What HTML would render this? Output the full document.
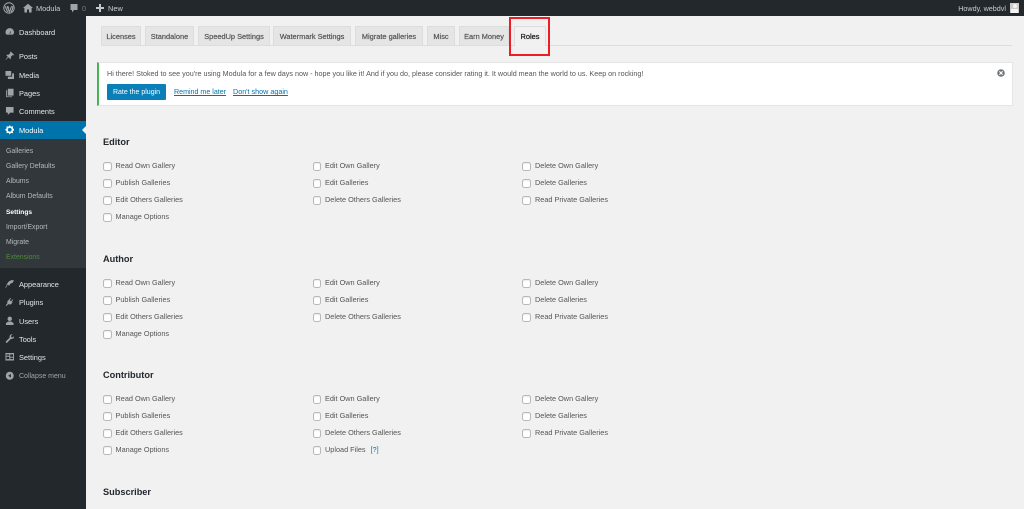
<!DOCTYPE html>
<html style="overflow:hidden;height:509px"><head><meta charset="utf-8"><style>
html,body{margin:0;padding:0}
body{width:1024px;height:509px;overflow:hidden;position:relative;background:#f1f1f1;font:7.4px/12px "Liberation Sans",sans-serif;color:#444}
#wrap{left:0;top:0;width:1024px;height:509px;overflow:hidden;background:#f1f1f1}
div,span,a,svg{position:absolute;white-space:nowrap}
#bar{left:0;top:0;width:1024px;height:16px;background:#23282d}
#bar span{color:#ccc;top:2.5px;font-size:7.4px}
#side{left:0;top:16px;width:85.5px;height:493px;background:#23282d}
#sub{left:0;top:139px;width:85.5px;height:129px;background:#32373c}
.m{left:19px;color:#e4e6e8;margin-top:-5.5px;font-size:7.4px}
.s{left:6px;color:#b4b9be;margin-top:-5.5px;font-size:6.9px}
.i{left:4.5px;width:9.5px;height:9.5px;margin-top:-5px;fill:#9ea3a8}
.tab{top:26px;height:18px;background:#e5e5e5;border:1px solid #ddd;border-bottom:0;text-align:center;line-height:20px;color:#555;font-size:7.4px;-webkit-text-stroke:.2px #555}
.sec{left:0;width:1024px;height:17px}
.sec b{left:103px;top:-7px;font-size:9.2px;line-height:14px;color:#23282d;position:absolute}
.c{width:8.5px;height:8.5px;box-sizing:border-box;background:#fff;border:1px solid #b4b9be;border-radius:2.5px;box-shadow:inset 0 1px 1px rgba(0,0,0,.08)}
.l{color:#555;font-size:7.3px}
.x1{left:103px}.x2{left:312.5px}.x3{left:522px}
.t1{left:115.5px}.t2{left:325px}.t3{left:535px}
.c.r1{top:20px}.c.r2{top:37px}.c.r3{top:54px}.c.r4{top:71px}
.l.r1{top:18px}.l.r2{top:35px}.l.r3{top:52px}.l.r4{top:69px}
</style></head><body><div id="wrap">
<div id="side"></div>
<div id="sub"></div>
<div id="bar">
<svg style="left:3px;top:2px" width="12" height="12" viewBox="0 0 12 12"><circle cx="6" cy="6" r="5.2" fill="none" stroke="#a0a5aa" stroke-width="1"/><path d="M2.2 4.4 4.6 10M4 4.2 6.4 10 8.6 4.2M6 6.6 4.6 4.2M9.6 4.2C10.2 6 9.4 7.8 8 10" fill="none" stroke="#a0a5aa" stroke-width="1.1"/></svg>
<svg style="left:23px;top:3px" width="10" height="10" viewBox="0 0 10 10"><path d="M5 .8 10 5H8.6V9.5H6V6.5H4V9.5H1.4V5H0Z" fill="#a0a5aa"/></svg>
<span style="left:36px">Modula</span>
<svg style="left:69px;top:3px" width="10" height="10" viewBox="0 0 10 10"><path d="M1.5 1H8.5V7H5L3 9.5V7H1.5Z" fill="#a0a5aa"/></svg>
<span style="left:82px;color:#777">0</span>
<svg style="left:96px;top:4px" width="8" height="8" viewBox="0 0 8 8"><path d="M3 0H5V3H8V5H5V8H3V5H0V3H3Z" fill="#c4c7ca"/></svg>
<span style="left:108px">New</span>
<span style="right:18px;font-size:7.2px">Howdy, webdvl</span>
<div style="left:1010px;top:3px;width:9px;height:10px;background:#ccc"></div>
<div style="left:1012.5px;top:4px;width:4px;height:4px;background:#f4f4f4;border-radius:2px"></div>
<div style="left:1011px;top:8.5px;width:7px;height:4px;background:#f4f4f4"></div>
</div>

<div style="left:0;top:121px;width:85.5px;height:18px;background:#0073aa"></div>
<div style="left:81.5px;top:126px;width:0;height:0;border:4px solid transparent;border-right-color:#f1f1f1;border-left:0"></div>

<svg class="i" style="top:32px" viewBox="0 0 10 10"><path d="M5 1.2A4.5 4.5 0 0 0 .6 6.5L1.5 8H8.5L9.4 6.5A4.5 4.5 0 0 0 5 1.2ZM4.5 7 6.5 3.5 5.6 7Z"/></svg><span class="m" style="top:32px">Dashboard</span>
<svg class="i" style="top:56px" viewBox="0 0 10 10"><path d="M6 .5 9.5 4 8.6 4.8 7.8 4.4 6 6.4 6.2 8 5.4 8.6 3.6 6.6 1 9.4.6 9 3 6 1.4 4.6 2 3.8 3.6 4 5.6 2.2 5.2 1.4Z"/></svg><span class="m" style="top:56px">Posts</span>
<svg class="i" style="top:75px" viewBox="0 0 10 10"><path d="M.5 1H6.5V6H.5ZM7.5 3.5H9.5V9.5H3V7H7.5Z"/></svg><span class="m" style="top:75px">Media</span>
<svg class="i" style="top:93px" viewBox="0 0 10 10"><path d="M3 .8H9V8H3ZM1.2 2.2H2.2V8.8H7.5V9.6H1.2Z"/></svg><span class="m" style="top:93px">Pages</span>
<svg class="i" style="top:111px" viewBox="0 0 10 10"><path d="M1 1H9V7H5.5L3 9.5V7H1Z"/></svg><span class="m" style="top:111px">Comments</span>
<svg class="i" style="top:130px;fill:#fff" viewBox="0 0 10 10"><path d="M5 0 6 1.6 8.5 1.5 8.2 3.4 10 5 8.2 6.6 8.5 8.5 6 8.4 5 10 4 8.4 1.5 8.5 1.8 6.6 0 5 1.8 3.4 1.5 1.5 4 1.6ZM5 3A2 2 0 1 0 5 7 2 2 0 1 0 5 3Z" fill-rule="evenodd"/></svg><span class="m" style="top:130px;color:#fff">Modula</span>

<span class="s" style="top:151px">Galleries</span>
<span class="s" style="top:166px">Gallery Defaults</span>
<span class="s" style="top:181px">Albums</span>
<span class="s" style="top:196px">Album Defaults</span>
<span class="s" style="top:212px;color:#fff;font-weight:bold;font-size:6.6px">Settings</span>
<span class="s" style="top:227px">Import/Export</span>
<span class="s" style="top:242px">Migrate</span>
<span class="s" style="top:257px;color:#4c8a3a">Extensions</span>

<svg class="i" style="top:284px" viewBox="0 0 10 10"><path d="M9.5 1.5 8 4 5.5 5 4.5 7 2.5 6 1 9.5.5 9 2 5.5 3.5 3 6.5 1.2Z"/></svg><span class="m" style="top:284px">Appearance</span>
<svg class="i" style="top:302px" viewBox="0 0 10 10"><path d="M5.5 1 6.3 1.5 5 3.5 6.5 4.5 7.8 2.5 8.6 3 7.2 5.2 8 6 5.5 8 3.5 7.5 1.5 9.5.8 8.8 2.5 6.5 2.5 4.5 4 3Z"/></svg><span class="m" style="top:302px">Plugins</span>
<svg class="i" style="top:321px" viewBox="0 0 10 10"><circle cx="5" cy="3" r="2.3"/><path d="M1 9.5V7.5L3.4 5.8H6.6L9 7.5V9.5Z"/></svg><span class="m" style="top:321px">Users</span>
<svg class="i" style="top:339px" viewBox="0 0 10 10"><path d="M9.6 2.2 7.8 3.8 6.4 3.2 6.6 1.4 8 .4C6.4 0 5 1 4.8 2.6L4.9 3.8 .6 8.2 1.8 9.6 6.2 5.1C8 5.6 9.8 4.2 9.6 2.2Z"/></svg><span class="m" style="top:339px">Tools</span>
<svg class="i" style="top:357px" viewBox="0 0 10 10"><path d="M.5 1H9.5V9H.5ZM1.5 2.5V4H4.5V2.5ZM5.5 2.5V5H8.5V2.5ZM1.5 5V7.5H4.5V5ZM5.5 6V7.5H8.5V6Z" fill-rule="evenodd"/></svg><span class="m" style="top:357px">Settings</span>
<svg class="i" style="top:376px" viewBox="0 0 10 10"><path d="M5 .8A4.2 4.2 0 1 0 5 9.2 4.2 4.2 0 1 0 5 .8ZM6.2 3V7L3.4 5Z" fill-rule="evenodd"/></svg><span class="m" style="top:376px;color:#a0a5aa;font-size:7px">Collapse menu</span>

<div style="left:101px;top:45px;width:911px;height:1px;background:#ddd"></div>
<div class="tab" style="left:101px;width:38px">Licenses</div>
<div class="tab" style="left:145px;width:47px">Standalone</div>
<div class="tab" style="left:198px;width:70px">SpeedUp Settings</div>
<div class="tab" style="left:273px;width:76px">Watermark Settings</div>
<div class="tab" style="left:355px;width:66px">Migrate galleries</div>
<div class="tab" style="left:427px;width:26px">Misc</div>
<div class="tab" style="left:459px;width:48px">Earn Money</div>
<div class="tab" style="left:514px;width:30px;height:19px;background:#f1f1f1;color:#222;-webkit-text-stroke:.25px #222">Roles</div>
<div style="left:509px;top:17px;width:37px;height:35px;border:2px solid #ee1c25"></div>

<div style="left:97px;top:62px;width:913px;height:41.5px;background:#fff;border:1px solid #e5e5e5;border-left:2px solid #46b450"></div>
<span style="left:107px;top:67.5px;color:#555;font-size:7.2px">Hi there! Stoked to see you're using Modula for a few days now - hope you like it! And if you do, please consider rating it. It would mean the world to us. Keep on rocking!</span>
<div style="left:107px;top:84px;width:59px;height:16px;background:#0a7fb8;border-radius:1px"></div>
<span style="left:107px;top:86.5px;width:59px;color:#fff;text-align:center;line-height:12px;font-size:7px">Rate the plugin</span>
<a style="left:174px;top:86px;color:#0073aa;text-decoration:underline;font-size:7.1px">Remind me later</a>
<a style="left:233px;top:86px;color:#0073aa;text-decoration:underline;font-size:7.2px">Don't show again</a>
<svg style="left:997px;top:69px" width="8" height="8" viewBox="0 0 8 8"><circle cx="4" cy="4" r="3.8" fill="#72777c"/><path d="M2.4 2.4 5.6 5.6M5.6 2.4 2.4 5.6" stroke="#fff" stroke-width="1.1"/></svg>

<div class="sec" style="top:142px"><b>Editor</b>
<div class="c x1 r1"></div><span class="l t1 r1">Read Own Gallery</span><div class="c x2 r1"></div><span class="l t2 r1">Edit Own Gallery</span><div class="c x3 r1"></div><span class="l t3 r1">Delete Own Gallery</span>
<div class="c x1 r2"></div><span class="l t1 r2">Publish Galleries</span><div class="c x2 r2"></div><span class="l t2 r2">Edit Galleries</span><div class="c x3 r2"></div><span class="l t3 r2">Delete Galleries</span>
<div class="c x1 r3"></div><span class="l t1 r3">Edit Others Galleries</span><div class="c x2 r3"></div><span class="l t2 r3">Delete Others Galleries</span><div class="c x3 r3"></div><span class="l t3 r3">Read Private Galleries</span>
<div class="c x1 r4"></div><span class="l t1 r4">Manage Options</span>
</div>
<div class="sec" style="top:259px"><b>Author</b>
<div class="c x1 r1"></div><span class="l t1 r1">Read Own Gallery</span><div class="c x2 r1"></div><span class="l t2 r1">Edit Own Gallery</span><div class="c x3 r1"></div><span class="l t3 r1">Delete Own Gallery</span>
<div class="c x1 r2"></div><span class="l t1 r2">Publish Galleries</span><div class="c x2 r2"></div><span class="l t2 r2">Edit Galleries</span><div class="c x3 r2"></div><span class="l t3 r2">Delete Galleries</span>
<div class="c x1 r3"></div><span class="l t1 r3">Edit Others Galleries</span><div class="c x2 r3"></div><span class="l t2 r3">Delete Others Galleries</span><div class="c x3 r3"></div><span class="l t3 r3">Read Private Galleries</span>
<div class="c x1 r4"></div><span class="l t1 r4">Manage Options</span>
</div>
<div class="sec" style="top:375px"><b>Contributor</b>
<div class="c x1 r1"></div><span class="l t1 r1">Read Own Gallery</span><div class="c x2 r1"></div><span class="l t2 r1">Edit Own Gallery</span><div class="c x3 r1"></div><span class="l t3 r1">Delete Own Gallery</span>
<div class="c x1 r2"></div><span class="l t1 r2">Publish Galleries</span><div class="c x2 r2"></div><span class="l t2 r2">Edit Galleries</span><div class="c x3 r2"></div><span class="l t3 r2">Delete Galleries</span>
<div class="c x1 r3"></div><span class="l t1 r3">Edit Others Galleries</span><div class="c x2 r3"></div><span class="l t2 r3">Delete Others Galleries</span><div class="c x3 r3"></div><span class="l t3 r3">Read Private Galleries</span>
<div class="c x1 r4"></div><span class="l t1 r4">Manage Options</span><div class="c x2 r4"></div><span class="l t2 r4">Upload Files</span><span class="l r4" style="left:370.5px;color:#0073aa">[?]</span>
</div>
<div class="sec" style="top:491.5px"><b>Subscriber</b></div>
</div></body></html>
